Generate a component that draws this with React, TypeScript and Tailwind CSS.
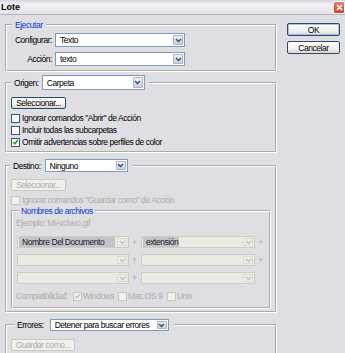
import React from "react";

const groove = "border-2 border-white [border-style:groove]";

function Chevron({ color }: { color: string }) {
  return (
    <svg width="7" height="5" viewBox="0 0 7 5">
      <path d="M1 1l2.5 2.5L6 1" stroke={color} strokeWidth="1.4" fill="none" />
    </svg>
  );
}

function Combo({
  className,
  value,
  disabled,
  selected,
}: {
  className: string;
  value?: string;
  disabled?: boolean;
  selected?: "full" | "text";
}) {
  return (
    <div
      className={
        "flex items-stretch border " +
        (disabled ? "border-[#cfcdbf] bg-[#ebeae4] " : "border-[#7f9db9] bg-white ") +
        className
      }
    >
      <div className="flex min-w-0 flex-1 items-center px-[1px]">
        {value ? (
          <span
            className={
              "flex h-full items-center whitespace-nowrap pl-[3px] pr-[1px] " +
              (selected === "full" ? "flex-1 bg-[#c4c3cb] text-[#1a1a1a]" : "") +
              (selected === "text" ? "bg-[#c4c3cb] text-[#1a1a1a]" : "")
            }
          >
            {value}
          </span>
        ) : null}
      </div>
      <div
        className={
          "m-[1px] flex w-[10px] items-center justify-center rounded-[1px] border " +
          (disabled
            ? "border-[#dcdad0] bg-[#eeede8]"
            : "border-[#a6b3ca] bg-[linear-gradient(#eef0f6,#c9cfdd)]")
        }
      >
        <Chevron color={disabled ? "#c4c3bb" : "#3d4a66"} />
      </div>
    </div>
  );
}

function Check({ checked, disabled }: { checked?: boolean; disabled?: boolean }) {
  return (
    <span
      className={
        "flex h-[9px] w-[9px] shrink-0 items-center justify-center border " +
        (disabled ? "border-[#c8c7bf] bg-[#f2f1ec]" : "border-[#3a5778] bg-white")
      }
    >
      {checked ? (
        <svg width="7" height="6" viewBox="0 0 7 6">
          <path
            d="M1 3l1.8 1.8L6 1"
            stroke={disabled ? "#c4c3bb" : "#21a121"}
            strokeWidth="1.5"
            fill="none"
          />
        </svg>
      ) : null}
    </span>
  );
}

function Btn({
  className,
  label,
  disabled,
  primary,
}: {
  className: string;
  label: string;
  disabled?: boolean;
  primary?: boolean;
}) {
  return (
    <div
      className={
        "flex items-center justify-center whitespace-nowrap rounded-[2px] border " +
        (disabled
          ? "border-[#cbc9bd] bg-[#f1f0ea] text-[#aeada5] "
          : "border-[#2c4a6e] bg-[linear-gradient(#ffffff,#f1f1ec_65%,#d9d6cd)] text-black ") +
        (primary ? "shadow-[inset_0_0_0_1px_#a9c0ec] " : "") +
        className
      }
    >
      {label}
    </div>
  );
}

export default function App() {
  return (
    <div className="h-[353px] w-[345px] overflow-hidden bg-[#dfdee3] font-['Liberation_Sans',Arial,sans-serif] text-[8.5px] leading-[10px] tracking-[-0.45px] text-black">
      <div className="flex h-[15px] items-center justify-between border-b border-[#b4b4bc] bg-[linear-gradient(#d4d4dc,#f2f2f6_30%,#e2e2e8)] pl-[1px]">
        <span className="text-[9px] font-bold tracking-[0px]">Lote</span>
        <div className="flex h-[13px] w-[12px] items-center justify-center rounded-[2px] border border-white bg-[linear-gradient(#ec7a6a,#d4402c)]">
          <svg width="7" height="7" viewBox="0 0 7 7">
            <path d="M1 1l5 5M6 1l-5 5" stroke="#fff" strokeWidth="1.6" />
          </svg>
        </div>
      </div>

      <div className="flex pl-[5px]">
        <div className="w-[272px]">
          {/* Ejecutar */}
          <fieldset className={groove + " mt-[5px] pb-[4px]"}>
            <legend className="ml-[5px] px-[3px] leading-[10px] text-[#0b3ad6]">Ejecutar</legend>
            <div className="grid grid-cols-[45px_130px] items-center gap-x-[3px] gap-y-[5px] pt-[3px]">
              <span className="text-right">Configurar:</span>
              <Combo className="h-[14px] w-[130px]" value="Texto" />
              <span className="text-right">Acción:</span>
              <Combo className="h-[14px] w-[130px]" value="texto" />
            </div>
          </fieldset>

          {/* Origen */}
          <fieldset className={groove + " mt-[3px] pb-[3px]"}>
            <legend className="ml-[4px] flex items-center gap-[3px] pl-[3px] pr-[4px]">
              <span>Origen:</span>
              <Combo className="h-[15px] w-[103px]" value="Carpeta" />
            </legend>
            <div className="pl-[4px] pt-[7px]">
              <Btn className="h-[12px] w-[55px]" label="Seleccionar..." />
              <div className="mt-[3px]">
                <div className="flex h-[12px] items-center gap-[2px]">
                  <Check />
                  <span>Ignorar comandos "Abrir" de Acción</span>
                </div>
                <div className="flex h-[12px] items-center gap-[2px]">
                  <Check />
                  <span>Incluir todas las subcarpetas</span>
                </div>
                <div className="flex h-[12px] items-center gap-[2px]">
                  <Check checked />
                  <span>Omitir advertencias sobre perfiles de color</span>
                </div>
              </div>
            </div>
          </fieldset>

          {/* Destino */}
          <fieldset className={groove + " mt-[6px] pb-[2px]"}>
            <legend className="ml-[3px] flex items-center gap-[4px] pl-[3px] pr-[5px]">
              <span>Destino:</span>
              <Combo className="h-[13px] w-[83px]" value="Ninguno" />
            </legend>
            <div className="pl-[4px] pt-[7px]">
              <Btn className="h-[12px] w-[55px]" label="Seleccionar..." disabled />
              <div className="mt-[3px] flex h-[12px] items-center gap-[2px] text-[#aeada5]">
                <Check disabled />
                <span>Ignorar comandos "Guardar como" de Acción</span>
              </div>
            </div>
            <fieldset className={groove + " ml-[4px] w-[260px] pb-[6px]"}>
              <legend className="ml-[6px] px-[2px] leading-[10px] text-[#0b3ad6]">
                Nombres de archivos
              </legend>
              <div className="mt-[2px] h-[10px] pl-[3px] text-[#aeada5]">Ejemplo: MiArchivo.gif</div>
              <div className="mt-[8px] flex flex-col gap-[6px] pl-[4px]">
                <div className="flex h-[12px] items-center">
                  <Combo className="h-[12px] w-[112px]" value="Nombre Del Documento" disabled selected="full" />
                  <span className="w-[12px] pl-[3px] text-[#aeada5]">+</span>
                  <Combo className="h-[12px] w-[114px]" value="extensión" disabled selected="text" />
                  <span className="pl-[3px] text-[#aeada5]">+</span>
                </div>
                <div className="flex h-[12px] items-center">
                  <Combo className="h-[12px] w-[112px]" disabled />
                  <span className="w-[12px] pl-[3px] text-[#aeada5]">+</span>
                  <Combo className="h-[12px] w-[114px]" disabled />
                  <span className="pl-[3px] text-[#aeada5]">+</span>
                </div>
                <div className="flex h-[12px] items-center">
                  <Combo className="h-[12px] w-[112px]" disabled />
                  <span className="w-[12px] pl-[3px] text-[#aeada5]">+</span>
                  <Combo className="h-[12px] w-[114px]" disabled />
                </div>
              </div>
              <div className="mt-[7px] flex h-[10px] items-center pl-[3px] text-[#aeada5]">
                <span className="w-[57px]">Compatibilidad:</span>
                <div className="flex w-[45px] items-center gap-[1px]">
                  <Check checked disabled />
                  <span>Windows</span>
                </div>
                <div className="flex w-[49px] items-center gap-[1px]">
                  <Check disabled />
                  <span>Mac OS 9</span>
                </div>
                <div className="flex items-center gap-[1px]">
                  <Check disabled />
                  <span>Unix</span>
                </div>
              </div>
            </fieldset>
          </fieldset>

          {/* Errores */}
          <fieldset className={groove + " mt-[6px] pb-[20px]"}>
            <legend className="ml-[8px] flex items-center gap-[6px] pl-[2px] pr-[5px]">
              <span>Errores:</span>
              <Combo className="h-[12px] w-[119px]" value="Detener para buscar errores" />
            </legend>
            <div className="pl-[4px] pt-[8px]">
              <Btn className="h-[12px] w-[64px]" label="Guardar como..." disabled />
            </div>
          </fieldset>
        </div>

        <div className="ml-[10px] flex w-[53px] flex-col gap-[5px] pt-[8px]">
          <Btn className="h-[13px] w-[53px]" label="OK" primary />
          <Btn className="h-[13px] w-[53px]" label="Cancelar" />
        </div>
      </div>
    </div>
  );
}
